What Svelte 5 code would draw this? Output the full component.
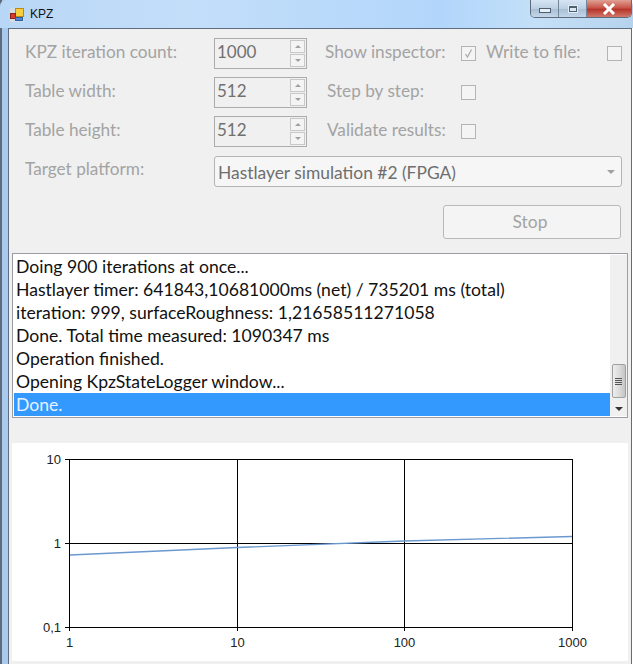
<script>
	const rows = [
		{ label: 'KPZ iteration count:', value: '1000' },
		{ label: 'Table width:', value: '512' },
		{ label: 'Table height:', value: '512' }
	];

	const log = [
		'Doing 900 iterations at once...',
		'Hastlayer timer: 641843,10681000ms (net) / 735201 ms (total)',
		'iteration: 999, surfaceRoughness: 1,21658511271058',
		'Done. Total time measured: 1090347 ms',
		'Operation finished.',
		'Opening KpzStateLogger window...',
		'Done.'
	];

	const xTicks = [
		{ x: 69.5, label: '1' },
		{ x: 237.5, label: '10' },
		{ x: 404.5, label: '100' },
		{ x: 572.5, label: '1000' }
	];

	const yTicks = [
		{ y: 459.5, label: '10' },
		{ y: 543.5, label: '1' },
		{ y: 627.5, label: '0,1' }
	];
</script>

<div class="window">
	<header class="titlebar">
		<svg class="app-icon" width="14" height="14" viewBox="0 0 14 14">
			<rect x="0" y="0" width="14" height="14" fill="#d6dce4" />
			<rect x="5.5" y="0.5" width="8" height="8" fill="#f7cf3c" stroke="#b98a1a" />
			<rect x="0.5" y="5.5" width="5" height="5" fill="#d8392b" stroke="#8e2018" />
			<rect x="5.5" y="9.5" width="7" height="3" fill="#4f86d6" stroke="#2f5ea6" />
		</svg>
		<span class="title">KPZ</span>
		<div class="controls">
			<div class="ctl min"><span class="min-glyph"></span></div>
			<div class="ctl max"><span class="max-glyph"></span></div>
			<div class="ctl close">
				<svg width="16" height="12" viewBox="0 0 16 12">
					<path d="M3 1 L13 11 M13 1 L3 11" stroke="#fff" stroke-width="3" fill="none" />
				</svg>
			</div>
		</div>
	</header>

	<main class="client">
		<div class="form">
			{#each rows as row, i}
				<span class="label">{row.label}</span>
				<div class="spin">
					<span class="spin-value">{row.value}</span>
					<div class="spin-btns">
						<div class="spin-btn"><i class="tri up"></i></div>
						<div class="spin-btn"><i class="tri down"></i></div>
					</div>
				</div>
				<span></span>
				{#if i === 0}
					<span class="label">Show inspector:</span>
					<div class="check">
						<svg width="11" height="11" viewBox="0 0 11 11">
							<path d="M2.5 6 L4.5 9 L8.5 1.5" stroke="#a8a8a8" stroke-width="1.2" fill="none" />
						</svg>
					</div>
					<span class="label">Write to file:</span>
					<div class="check"></div>
				{:else}
					<span class="label indent">{i === 1 ? 'Step by step:' : 'Validate results:'}</span>
					<div class="check"></div>
					<span></span>
					<span></span>
				{/if}
			{/each}
			<span class="label target">Target platform:</span>
			<div class="combo">
				<span>Hastlayer simulation #2 (FPGA)</span>
				<i class="tri down combo-arrow"></i>
			</div>
		</div>

		<div class="actions">
			<button class="stop" disabled>Stop</button>
		</div>

		<div class="listbox">
			<div class="lines">
				{#each log as line, i}
					<div class="line" class:selected={i === log.length - 1}>{line}</div>
				{/each}
			</div>
			<div class="scrollbar">
				<div class="thumb">
					<span></span><span></span><span></span><span></span>
				</div>
				<i class="tri down sb-down"></i>
			</div>
		</div>

		<div class="chart">
			<!-- viewBox is in window coordinates so the values read off the reference directly -->
			<svg width="616" height="218" viewBox="12 443 616 218">
				{#each xTicks as t}
					<line x1={t.x} x2={t.x} y1="459" y2="631" stroke="#000" />
					<text x={t.x} y="647" text-anchor="middle">{t.label}</text>
				{/each}
				{#each yTicks as t}
					<line x1="65" x2="573" y1={t.y} y2={t.y} stroke="#000" />
					<text x="61" y={t.y + 4} text-anchor="end">{t.label}</text>
				{/each}
				<polyline points="70,555 237,547.5 404,541 572,536.5" fill="none" stroke="#6b98cf" stroke-width="1.4" />
			</svg>
		</div>
	</main>
</div>

<style>
	:global(body) {
		margin: 0;
		background: #fff;
	}

	.window {
		width: 633px;
		height: 664px;
		box-sizing: border-box;
		overflow: hidden;
		display: flex;
		flex-direction: column;
		background: linear-gradient(90deg, #5f6b78 0, #5f6b78 2px, #a9c9ee 2px, #a9c9ee 8px, transparent 8px), #fff;
		font-family: Lato, "Liberation Sans", sans-serif;
		font-size: 17.4px;
		font-variant-ligatures: common-ligatures;
	}

	.titlebar {
		height: 28px;
		flex-shrink: 0;
		display: flex;
		align-items: flex-start;
		padding-left: 10px;
		background: linear-gradient(90deg, #b8d7f6 0%, #c3def9 30%, #b2d6fb 70%, #c4e0f8 85%, #b6d3ee 100%);
		border-radius: 6px 6px 0 0;
	}

	.app-icon {
		margin-top: 8px;
	}

	.title {
		margin: 6px 0 0 6px;
		font-family: "Liberation Sans", sans-serif;
		font-size: 12px;
		line-height: 17px;
		color: #111;
	}

	.controls {
		margin-left: auto;
		margin-right: 1px;
		height: 18px;
		display: flex;
		border: 1px solid #5d6b7c;
		border-top: none;
		border-radius: 0 0 5px 5px;
		overflow: hidden;
		box-sizing: border-box;
		width: 102px;
	}

	.ctl {
		display: flex;
		align-items: center;
		justify-content: center;
		background: linear-gradient(#d7e5f3, #bcd0e4 50%, #a9bdd3 52%, #c3d6ea);
		border-right: 1px solid #74869a;
		width: 28px;
		box-sizing: border-box;
	}

	.close {
		flex: 1;
		border-right: none;
		background: linear-gradient(#dfa194, #c9574a 45%, #b5352a 55%, #d0776a);
	}

	.min-glyph {
		width: 10px;
		height: 3px;
		margin-top: 4px;
		background: #e6eef6;
		border: 1px solid #4f5f72;
	}

	.max-glyph {
		width: 6px;
		height: 4px;
		background: #dbe7f3;
		border: 1px solid #4f5f72;
		outline: 1px solid #e3edf6;
		box-shadow: inset 0 1px 0 #4f5f72;
	}

	.client {
		flex: 1;
		margin: 0 1px 0 8px;
		background: #f0f0f0;
		border-top: 1px solid #5f6e7e;
		border-left: 1px solid #5f6e7e;
		border-right: 1px solid #5f6e7e;
		min-height: 0;
	}

	.form {
		display: grid;
		grid-template-columns: 189px 93px 18px 136px 25px 121px 15px;
		grid-auto-rows: 31px;
		row-gap: 8px;
		align-items: center;
		padding: 9px 0 0 16px;
	}

	.label {
		color: #a3a3a3;
		white-space: nowrap;
		font-size: 17.2px;
		padding-bottom: 4px;
	}

	.indent {
		padding-left: 2px;
	}

	.target {
		padding-bottom: 5px;
	}

	.spin {
		height: 31px;
		box-sizing: border-box;
		border: 1px solid #acacac;
		display: flex;
		align-items: center;
		justify-content: space-between;
		padding: 0 2px;
		color: #707070;
	}

	.spin-value {
		font-size: 17px;
		padding-bottom: 4px;
	}

	.spin-btns {
		width: 15px;
		height: 27px;
		display: flex;
		flex-direction: column;
		gap: 1px;
		margin-right: -1px;
	}

	.spin-btn {
		flex: 1;
		border: 1px solid #c8c8c8;
		background: #f4f4f4;
		display: flex;
		align-items: center;
		justify-content: center;
	}

	.tri {
		display: block;
		width: 0;
		height: 0;
		border-left: 3px solid transparent;
		border-right: 3px solid transparent;
	}

	.up {
		border-bottom: 3px solid #a0a0a0;
	}

	.down {
		border-top: 3px solid #a0a0a0;
	}

	.check {
		width: 13px;
		height: 13px;
		border: 1px solid #b4b4b4;
		background: #f4f4f4;
		display: flex;
		align-items: center;
		justify-content: center;
	}

	.combo {
		grid-column: 2 / -1;
		height: 31px;
		margin-top: 2px;
		box-sizing: border-box;
		border: 1px solid #b4b4b4;
		border-radius: 3px;
		background: #f6f6f6;
		display: flex;
		align-items: center;
		justify-content: space-between;
		padding: 1px 6px 0 3px;
		color: #6e6e6e;
	}

	.combo-arrow {
		border-left-width: 4px;
		border-right-width: 4px;
		border-top-width: 4px;
	}

	.actions {
		display: flex;
		justify-content: flex-end;
		margin-top: 19px;
		padding-right: 10px;
	}

	.stop {
		width: 178px;
		height: 34px;
		border: 1px solid #b8b8b8;
		border-radius: 3px;
		background: #f4f4f4;
		color: #a3a3a3;
		font: inherit;
		padding: 0 4px 2px 0;
	}

	.listbox {
		margin: 14px 3px 0;
		height: 165px;
		box-sizing: border-box;
		border: 1px solid #9a9da3;
		background: #fff;
		display: flex;
		padding: 1px 0 1px 1px;
	}

	.lines {
		flex: 1;
		min-width: 0;
		color: #111;
		font-size: 17.6px;
	}

	.line {
		height: 23px;
		line-height: 23px;
		padding-left: 2px;
		white-space: nowrap;
	}

	.selected {
		background: #3399ff;
		color: #e6f2ff;
	}

	.scrollbar {
		width: 17px;
		background: #f0f0f0;
		display: flex;
		flex-direction: column;
		align-items: center;
	}

	.thumb {
		margin-top: auto;
		width: 14px;
		height: 34px;
		box-sizing: border-box;
		border: 1px solid #a0a0a0;
		border-radius: 2px;
		background: linear-gradient(90deg, #eee, #d8d8d8 60%, #c4c4c4);
		display: flex;
		flex-direction: column;
		align-items: center;
		justify-content: center;
		gap: 1px;
	}

	.thumb span {
		width: 7px;
		height: 1px;
		background: #555;
	}

	.sb-down {
		margin: 9px 0 5px;
		border-left-width: 4px;
		border-right-width: 4px;
		border-top: 4px solid #333;
	}

	.chart {
		margin: 25px 3px 0;
		height: 218px;
		background: #fff;
	}

	.chart svg {
		display: block;
	}

	.chart text {
		font-family: "Liberation Sans", sans-serif;
		font-size: 13px;
		fill: #222;
	}
</style>
